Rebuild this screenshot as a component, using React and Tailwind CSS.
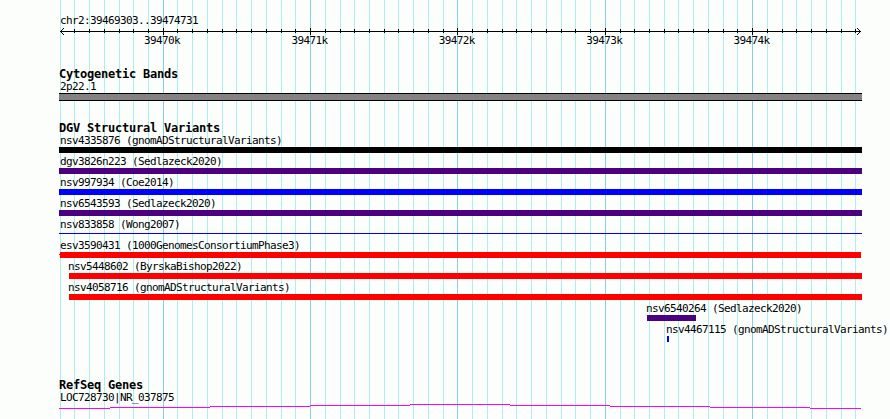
import React from 'react';

const minorLines = [
  60, 74, 89, 104, 119, 133, 148, 177, 192, 207, 222, 236, 251, 266, 281, 295,
  325, 340, 354, 369, 384, 398, 413, 428, 443, 472, 487, 502, 516, 531, 546,
  561, 575, 590, 620, 634, 649, 664, 678, 693, 708, 723, 737, 767, 782, 796,
  811, 826, 841, 855,
];

const majorLines = [163, 310, 457, 605, 752];

const scaleLabels = ['39470k', '39471k', '39472k', '39473k', '39474k'];

const variants = [
  { name: 'nsv4335876 (gnomADStructuralVariants)', indent: 'ml-[60px]', bar: 'ml-[59px] w-[803px] h-1.5 bg-black' },
  { name: 'dgv3826n223 (Sedlazeck2020)', indent: 'ml-[60px]', bar: 'ml-[59px] w-[803px] h-1.5 bg-[#4b0082]' },
  { name: 'nsv997934 (Coe2014)', indent: 'ml-[60px]', bar: 'ml-[59px] w-[803px] h-1.5 bg-[#0000ff]' },
  { name: 'nsv6543593 (Sedlazeck2020)', indent: 'ml-[60px]', bar: 'ml-[59px] w-[803px] h-1.5 bg-[#4b0082]' },
  { name: 'nsv833858 (Wong2007)', indent: 'ml-[60px]', bar: 'mt-[2px] ml-[59px] w-[803px] h-px bg-[#0000ff]' },
  {
    name: 'esv3590431 (1000GenomesConsortiumPhase3)',
    indent: 'ml-[60px]',
    bar: 'relative ml-[60px] w-[801px] h-1.5 bg-[#ff0000] before:absolute before:-left-px before:top-[2px] before:h-px before:w-px before:bg-[#ff0000]',
  },
  { name: 'nsv5448602 (ByrskaBishop2022)', indent: 'ml-[68px]', bar: 'ml-[69px] w-[793px] h-1.5 bg-[#ff0000]' },
  { name: 'nsv4058716 (gnomADStructuralVariants)', indent: 'ml-[68px]', bar: 'ml-[69px] w-[793px] h-1.5 bg-[#ff0000]' },
  { name: 'nsv6540264 (Sedlazeck2020)', indent: 'ml-[646px]', bar: 'ml-[647px] w-[49px] h-1.5 bg-[#4b0082]' },
  { name: 'nsv4467115 (gnomADStructuralVariants)', indent: 'ml-[666px]', bar: 'ml-[667px] w-[2px] h-1.5 bg-[#0000ff]' },
];

const GridLines = () => (
  <svg className="absolute inset-0" width="890" height="419" shapeRendering="crispEdges">
    {minorLines.map((x) => (
      <rect key={x} x={x} y="0" width="1" height="419" fill="#afeeee" />
    ))}
    {majorLines.map((x) => (
      <rect key={x} x={x} y="0" width="1" height="419" fill="#87ceeb" />
    ))}
  </svg>
);

const Ruler = () => (
  <svg className="block" width="890" height="7" shapeRendering="crispEdges">
    <rect x="60" y="3" width="801" height="1" />
    {minorLines.slice(1).map((x) => (
      <rect key={x} x={x} y="1" width="1" height="4" />
    ))}
    {majorLines.map((x) => (
      <rect key={x} x={x} y="0" width="1" height="7" />
    ))}
    <path d="M61 2h1v1h-1zM62 1h1v1h-1zM63 0h1v1h-1zM61 4h1v1h-1zM62 5h1v1h-1zM63 6h1v1h-1z" />
    <path d="M859 2h1v1h-1zM858 1h1v1h-1zM857 0h1v1h-1zM859 4h1v1h-1zM858 5h1v1h-1zM857 6h1v1h-1z" />
  </svg>
);

const Label = ({ className, children }) => (
  <div className={`h-[15px] text-[11px] leading-[15px] tracking-[-0.622px] ${className}`}>{children}</div>
);

const Title = ({ children }) => (
  <h2 className="ml-[59px] h-3 text-xs leading-3 font-bold tracking-[-0.225px]">{children}</h2>
);

const App = () => {
  return (
    <div className="relative w-[890px] h-[419px] overflow-hidden bg-[#fcfefc] text-black whitespace-nowrap font-['DejaVu_Sans_Mono',monospace]">
      <GridLines />
      <div className="relative">
        {/* Scale */}
        <div className="pt-[13px]">
          <Label className="ml-[60px]">chr2:39469303..39474731</Label>
          <Ruler />
          <div className="ml-[144px] flex gap-[111.4px]">
            {scaleLabels.map((label) => (
              <Label key={label} className="-mt-[2px] w-9">{label}</Label>
            ))}
          </div>
        </div>

        {/* Cytogenetic Bands */}
        <div className="pt-5">
          <Title>Cytogenetic Bands</Title>
          <Label className="-mt-px ml-[60px]">2p22.1</Label>
          <div className="relative -mt-px ml-[59px] h-2 w-[803px] border-y border-black bg-[#848284]" />
        </div>

        {/* DGV Structural Variants */}
        <div className="pt-[21px]">
          <Title>DGV Structural Variants</Title>
          <div className="-mt-px">
            {variants.map((v) => (
              <div key={v.name} className="flex h-[21px] flex-col">
                <Label className={v.indent}>{v.name}</Label>
                <div className="-mt-px">
                  <div className={v.bar} />
                </div>
              </div>
            ))}
          </div>
        </div>

        {/* RefSeq Genes */}
        <div className="pt-9">
          <Title>RefSeq Genes</Title>
          <Label className="-mt-px ml-[60px]">LOC728730|NR_037875</Label>
          <svg className="-mt-px block" width="890" height="5" shapeRendering="crispEdges" fill="#ff00ff">
            <rect x="59" y="4" width="51" height="1" />
            <rect x="110" y="3" width="100" height="1" />
            <rect x="210" y="2" width="100" height="1" />
            <rect x="310" y="1" width="100" height="1" />
            <rect x="410" y="0" width="100" height="1" />
            <rect x="510" y="1" width="100" height="1" />
            <rect x="610" y="2" width="100" height="1" />
            <rect x="710" y="3" width="100" height="1" />
            <rect x="810" y="4" width="51" height="1" />
          </svg>
        </div>
      </div>
    </div>
  );
};

export default App;
